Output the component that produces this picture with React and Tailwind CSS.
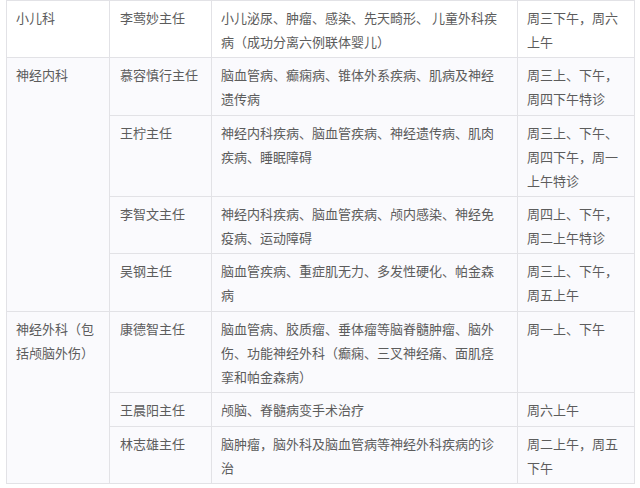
const rows = [
  {
    dept: ["小儿科"],
    span: 1,
    h: 57,
    doc: "李莺妙主任",
    desc: ["小儿泌尿、肿瘤、感染、先天畸形、 儿童外科疾", "病（成功分离六例联体婴儿）"],
    time: ["周三下午，周六", "上午"],
    light: true,
  },
  {
    dept: ["神经内科"],
    span: 4,
    h: 58,
    doc: "慕容慎行主任",
    desc: ["脑血管病、癫痫病、锥体外系疾病、肌病及神经", "遗传病"],
    time: ["周三上、下午，", "周四下午特诊"],
  },
  {
    h: 81,
    doc: "王柠主任",
    desc: ["神经内科疾病、脑血管疾病、神经遗传病、肌肉", "疾病、睡眠障碍"],
    time: ["周三上、下午、", "周四下午，周一", "上午特诊"],
  },
  {
    h: 57,
    doc: "李智文主任",
    desc: ["神经内科疾病、脑血管疾病、颅内感染、神经免", "疫病、运动障碍"],
    time: ["周四上、下午，", "周二上午特诊"],
  },
  {
    h: 58,
    doc: "吴钢主任",
    desc: ["脑血管疾病、重症肌无力、多发性硬化、帕金森", "病"],
    time: ["周三上、下午，", "周五上午"],
  },
  {
    dept: ["神经外科（包", "括颅脑外伤）"],
    span: 3,
    h: 81,
    doc: "康德智主任",
    desc: [
      "脑血管病、胶质瘤、垂体瘤等脑脊髓肿瘤、脑外",
      "伤、功能神经外科（癫痫、三叉神经痛、面肌痉",
      "挛和帕金森病）",
    ],
    time: ["周一上、下午"],
  },
  {
    h: 34,
    doc: "王晨阳主任",
    desc: ["颅脑、脊髓病变手术治疗"],
    time: ["周六上午"],
  },
  {
    h: 57,
    doc: "林志雄主任",
    desc: ["脑肿瘤，脑外科及脑血管病等神经外科疾病的诊", "治"],
    time: ["周二上午，周五", "下午"],
  },
]

function Lines({ items }) {
  return items.map((t, i) => (
    <div key={i} className="whitespace-nowrap">
      {t}
    </div>
  ))
}

export default function App() {
  return (
    <div
      className="h-[488px] w-[640px] bg-white pl-[6px] text-[13px] leading-[24px] text-[#5c5c5c]"
      style={{ fontFamily: '"Noto Sans CJK SC", "Noto Sans", sans-serif' }}
    >
      <table className="w-[628px] table-fixed border-collapse">
        <colgroup>
          <col className="w-[103px]" />
          <col className="w-[102px]" />
          <col className="w-[306px]" />
          <col className="w-[117px]" />
        </colgroup>
        <tbody>
          {rows.map((r, i) => (
            <tr key={i} style={{ height: r.h }} className={r.light ? "bg-white" : "bg-[#fafafd]"}>
              {r.dept && (
                <td
                  rowSpan={r.span}
                  className="border border-[#e2e2e6] px-[9px] pt-[5px] align-top"
                >
                  <Lines items={r.dept} />
                </td>
              )}
              <td className="border border-[#e2e2e6] px-[10px] pt-[5px] align-top">
                {r.doc}
              </td>
              <td className="border border-[#e2e2e6] px-[9px] pt-[5px] align-top">
                <Lines items={r.desc} />
              </td>
              <td className="border border-[#e2e2e6] px-[9px] pt-[5px] align-top">
                <Lines items={r.time} />
              </td>
            </tr>
          ))}
        </tbody>
      </table>
    </div>
  )
}
